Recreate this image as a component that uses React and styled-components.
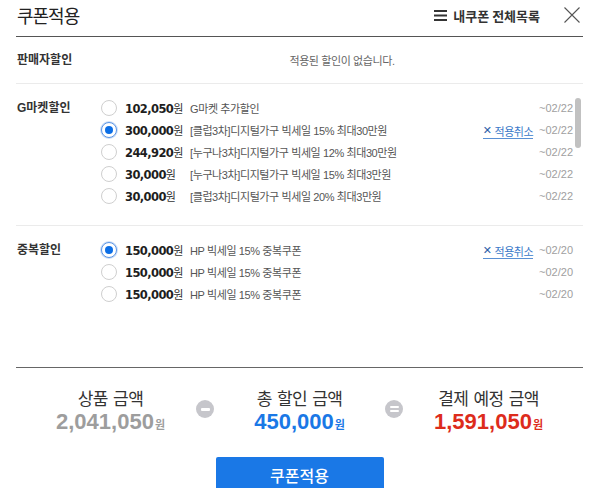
import React from "react";
import styled, { createGlobalStyle } from "styled-components";

const KR = `"Liberation Sans", "Noto Sans CJK KR", sans-serif`;

const GlobalStyle = createGlobalStyle`
  html, body {
    margin: 0;
    padding: 0;
    background: #fff;
  }
  body {
    font-family: ${KR};
    color: #333;
  }
`;

const Popup = styled.div`
  width: 600px;
  height: 488px;
  box-sizing: border-box;
  padding: 0 17px 0 16px;
  overflow: hidden;
`;

const Header = styled.header`
  height: 37px;
  box-sizing: border-box;
  border-bottom: 1px solid #555;
  display: flex;
  align-items: center;
  padding-bottom: 6px;
`;

const Title = styled.h1`
  margin: 0 0 0 1px;
  flex: 1;
  font-family: "Noto Sans CJK KR", sans-serif;
  font-size: 18px;
  font-weight: 400;
  letter-spacing: -1px;
  color: #222;
`;

const AllLink = styled.a`
  display: flex;
  align-items: center;
  gap: 6px;
  font-family: "Noto Sans CJK KR", sans-serif;
  font-size: 13px;
  font-weight: 700;
  color: #333;
  text-decoration: none;
`;

const CloseButton = styled.button`
  border: 0;
  background: none;
  padding: 0;
  margin: 0 3px 0 24px;
  width: 16px;
  height: 16px;
  display: flex;
`;

const Body = styled.div`
  height: 331px;
  box-sizing: border-box;
  border-bottom: 1px solid #666;
  display: flex;
  flex-direction: column;
`;

const Section = styled.section`
  position: relative;
  display: flex;
  box-sizing: border-box;
  height: ${(p) => p.$height || "auto"};
  flex: ${(p) => (p.$grow ? 1 : "none")};
  padding-top: ${(p) => p.$pad || 0};
  border-bottom: ${(p) => (p.$last ? "0" : "1px solid #ebebeb")};
  align-items: ${(p) => (p.$center ? "center" : "flex-start")};
`;

const Label = styled.h2`
  margin: 0;
  width: 84px;
  flex: none;
  padding-left: 1px;
  font-family: ${KR};
  font-size: 12px;
  font-weight: 700;
  color: #333;
  line-height: 22px;
`;

const Empty = styled.p`
  margin: 0;
  flex: 1;
  text-align: center;
  font-size: 11px;
  letter-spacing: -0.4px;
  color: #666;
`;

const List = styled.ul`
  list-style: none;
  margin: 0;
  padding: 0 10px 0 0;
  flex: 1;
`;

const Row = styled.li`
  height: 22px;
  display: flex;
  align-items: center;
`;

const Radio = styled.span`
  width: 16px;
  height: 16px;
  box-sizing: border-box;
  border-radius: 50%;
  border: 1px solid ${(p) => (p.$checked ? "#5b95e6" : "#cfcfcf")};
  box-shadow: ${(p) => (p.$checked ? "0 0 0 1px #cfe0f7" : "none")};
  background: #fff;
  display: flex;
  align-items: center;
  justify-content: center;
  flex: none;
  margin-right: 8px;

  &::after {
    content: "";
    width: 8px;
    height: 8px;
    border-radius: 50%;
    background: ${(p) => (p.$checked ? "#0b6ee6" : "transparent")};
  }
`;

const Amount = styled.span`
  min-width: 63px;
  margin-right: 2px;
  white-space: nowrap;
  font-size: 11px;
  color: #333;

  b {
    font-family: "DejaVu Sans", sans-serif;
    font-size: 11.5px;
    font-weight: 700;
    letter-spacing: -0.6px;
    color: #1e1e1e;
  }
`;

const Desc = styled.span`
  flex: 1;
  font-size: 11px;
  letter-spacing: -0.4px;
  color: #555;
  white-space: nowrap;
`;

const Cancel = styled.a`
  display: flex;
  align-items: center;
  gap: 3px;
  font-family: "Noto Sans CJK KR", sans-serif;
  font-size: 11px;
  letter-spacing: -0.5px;
  color: #3a79c9;
  text-decoration: none;
  border-bottom: 1px solid #5a90d4;
  line-height: 14px;
  margin-top: 3px;

  span {
    font-family: "DejaVu Sans", sans-serif;
    font-weight: 700;
    font-size: 11px;
    color: #2c5ea8;
  }
`;

const DateText = styled.span`
  width: 34px;
  margin-left: 6px;
  text-align: right;
  font-family: "Liberation Sans", sans-serif;
  font-size: 11px;
  color: #a0a0a0;
`;

const ScrollThumb = styled.div`
  position: absolute;
  right: 2px;
  top: 14px;
  width: 6px;
  height: 50px;
  border-radius: 3px;
  background: #c1c1c1;
`;

const Summary = styled.div`
  display: grid;
  grid-template-columns: 1fr 0 1fr 0 1fr;
  align-items: center;
  padding-top: 19px;
`;

const Column = styled.div`
  text-align: center;
`;

const SumLabel = styled.div`
  font-family: "Noto Sans CJK KR", sans-serif;
  font-size: 17px;
  letter-spacing: -0.6px;
  word-spacing: 2px;
  line-height: 22px;
  color: #333;
`;

const SumValue = styled.div`
  font-family: "Liberation Sans", sans-serif;
  font-weight: 700;
  font-size: 22px;
  line-height: 26px;
  color: ${(p) => p.$color};

  small {
    font-family: "Noto Sans CJK KR", sans-serif;
    font-size: 11px;
    margin-left: 1px;
  }
`;

const Operator = styled.span`
  justify-self: center;
  width: 18px;
  height: 18px;
  margin-bottom: 6px;
  border-radius: 50%;
  background: #c6c6cb;
  display: flex;
  flex-direction: column;
  align-items: center;
  justify-content: center;
  gap: 2px;

  i {
    width: 9px;
    height: ${(p) => (p.$equals ? "2px" : "3px")};
    border-radius: 1px;
    background: #fff;
  }
`;

const ApplyButton = styled.button`
  display: block;
  margin: 20px auto 0;
  width: 168px;
  height: 44px;
  border: 0;
  border-radius: 2px;
  background: #1a78e6;
  color: #fff;
  font-family: "Noto Sans CJK KR", sans-serif;
  font-size: 16px;
  font-weight: 500;
  padding-bottom: 10px;
`;

const gmarket = [
  { amount: "102,050", desc: "G마켓 추가할인", date: "~02/22" },
  { amount: "300,000", desc: "[클럽3차]디지털가구 빅세일 15% 최대30만원", date: "~02/22", checked: true },
  { amount: "244,920", desc: "[누구나3차]디지털가구 빅세일 12% 최대30만원", date: "~02/22" },
  { amount: "30,000", desc: "[누구나3차]디지털가구 빅세일 15% 최대3만원", date: "~02/22" },
  { amount: "30,000", desc: "[클럽3차]디지털가구 빅세일 20% 최대3만원", date: "~02/22" },
];

const duplicate = [
  { amount: "150,000", desc: "HP 빅세일 15% 중복쿠폰", date: "~02/20", checked: true },
  { amount: "150,000", desc: "HP 빅세일 15% 중복쿠폰", date: "~02/20" },
  { amount: "150,000", desc: "HP 빅세일 15% 중복쿠폰", date: "~02/20" },
];

const CouponRows = ({ items }) => (
  <List>
    {items.map((c, i) => (
      <Row key={i}>
        <Radio $checked={c.checked} />
        <Amount>
          <b>{c.amount}</b>원
        </Amount>
        <Desc>{c.desc}</Desc>
        {c.checked && (
          <Cancel href="#">
            <span>✕</span>적용취소
          </Cancel>
        )}
        <DateText>{c.date}</DateText>
      </Row>
    ))}
  </List>
);

const MenuIcon = () => (
  <svg width="13" height="11" viewBox="0 0 13 11">
    <rect x="0" y="0" width="13" height="2" fill="#333" />
    <rect x="0" y="4.5" width="13" height="2" fill="#333" />
    <rect x="0" y="9" width="13" height="2" fill="#333" />
  </svg>
);

const CloseIcon = () => (
  <svg width="16" height="16" viewBox="0 0 16 16">
    <path d="M0.5 0.5 L15.5 15.5 M15.5 0.5 L0.5 15.5" stroke="#555" strokeWidth="1.1" />
  </svg>
);

const App = () => (
  <Popup>
    <GlobalStyle />
    <Header>
      <Title>쿠폰적용</Title>
      <AllLink href="#">
        <MenuIcon />
        내쿠폰 전체목록
      </AllLink>
      <CloseButton aria-label="닫기">
        <CloseIcon />
      </CloseButton>
    </Header>

    <Body>
      <Section $height="47px" $center>
        <Label>판매자할인</Label>
        <Empty>적용된 할인이 없습니다.</Empty>
      </Section>
      <Section $height="142px" $pad="13px">
        <Label>G마켓할인</Label>
        <CouponRows items={gmarket} />
        <ScrollThumb />
      </Section>
      <Section $grow $last $pad="13px">
        <Label>중복할인</Label>
        <CouponRows items={duplicate} />
      </Section>
    </Body>

    <Summary>
      <Column>
        <SumLabel>상품 금액</SumLabel>
        <SumValue $color="#9d9d9d">
          2,041,050<small>원</small>
        </SumValue>
      </Column>
      <Operator>
        <i />
      </Operator>
      <Column>
        <SumLabel>총 할인 금액</SumLabel>
        <SumValue $color="#1a78e6">
          450,000<small>원</small>
        </SumValue>
      </Column>
      <Operator $equals>
        <i />
        <i />
      </Operator>
      <Column>
        <SumLabel>결제 예정 금액</SumLabel>
        <SumValue $color="#dd2c1c">
          1,591,050<small>원</small>
        </SumValue>
      </Column>
    </Summary>

    <ApplyButton>쿠폰적용</ApplyButton>
  </Popup>
);

export default App;
